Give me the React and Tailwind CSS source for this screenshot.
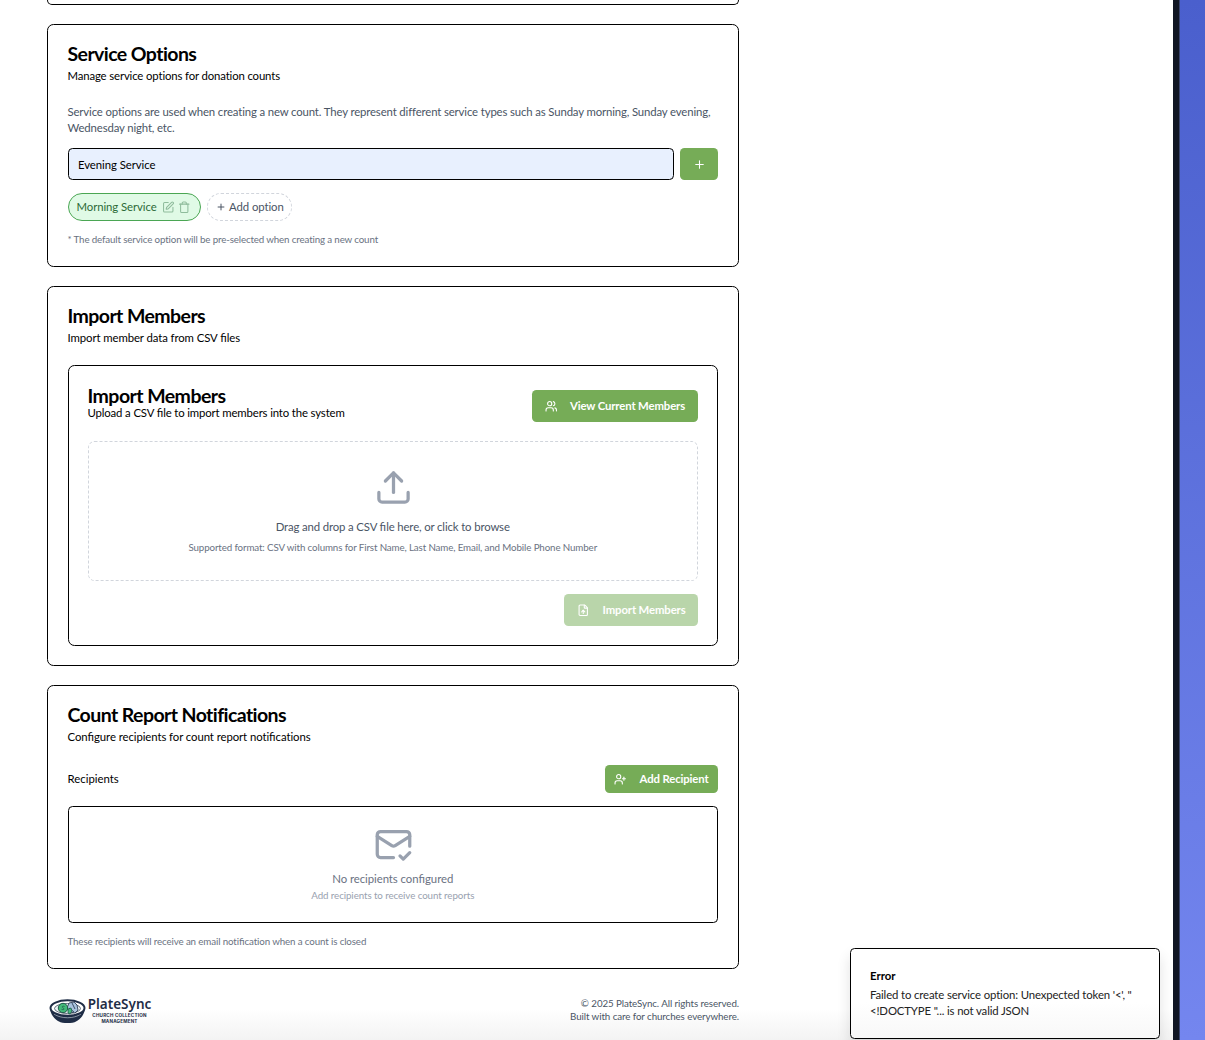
import {
  Plus,
  Upload,
  Users,
  UserPlus,
  FileUp,
  MailCheck,
  SquarePen,
  Trash,
} from "lucide-react";

// Joins "fi" pairs while leaving Lato's other ligatures off.
function Fi() {
  return <span className="tracking-normal [font-feature-settings:'liga'_1]">fi</span>;
}

function Card({ className = "", children }) {
  return (
    <section className={`w-[692px] rounded-[6.5px] border border-black bg-white pr-[20px] pl-[19.5px] ${className}`}>
      {children}
    </section>
  );
}

function CardHeader({ title, description, tracking }) {
  return (
    <header className="h-[60px] pt-[19px]">
      <h2 className="text-[19.5px] leading-[19.5px] font-bold tracking-[-0.58px]">{title}</h2>
      <p className={`mt-[4.5px] text-[11.375px] leading-[16.25px] ${tracking}`}>{description}</p>
    </header>
  );
}

function Button({ icon: Icon, className = "", children }) {
  return (
    <button
      className={`flex items-center justify-end rounded-[4.5px] bg-[#76ac57] text-[11.375px] leading-[16px] font-bold tracking-[-0.14px] text-white ${className}`}
    >
      <Icon size={12.5} strokeWidth={2.1} />
      {children}
    </button>
  );
}

function ServiceOptions() {
  return (
    <Card className="mt-[19px] h-[243px]">
      <CardHeader
        title="Service Options"
        description="Manage service options for donation counts"
        tracking="tracking-[-0.14px]"
      />
      <p className="mt-[19px] text-[11.375px] leading-[16.25px] tracking-[-0.137px] text-gray-600">
        Service options are used when creating a new count. They represent different service types such as Sunday
        morning, Sunday evening, Wednesday night, etc.
      </p>
      <div className="mt-[11.5px] flex gap-[6px]">
        <input
          className="h-8 w-[606px] shrink-0 rounded-[4.5px] border border-black bg-[#e8f0fe] px-[9.5px] pt-px text-[11.375px] tracking-[-0.07px]"
          defaultValue="Evening Service"
        />
        <button className="flex h-8 w-[38px] items-center justify-center rounded-[4.5px] bg-[#76ac57] pl-px text-white">
          <Plus size={13} strokeWidth={2} />
        </button>
      </div>
      <div className="mt-[13px] flex gap-[6.5px] text-[11.375px] leading-[16px] tracking-[-0.08px]">
        <div className="flex h-7 w-[133px] items-center rounded-full border border-[#4aa653] bg-[#e0fae6] pl-[8px] text-[#2d6a38]">
          <span className="w-[80.5px] whitespace-nowrap">Morning Service</span>
          <SquarePen size={12.5} strokeWidth={2} className="ml-[5px] text-[#8fbc9c]" />
          <Trash size={12.5} strokeWidth={2} className="ml-[3.5px] text-[#8fbc9c]" />
        </div>
        <div className="flex h-7 w-[85px] items-center rounded-full border border-dashed border-gray-300 pl-[8px] text-gray-600">
          <Plus size={10} strokeWidth={2.4} />
          <span className="ml-[3px] whitespace-nowrap">Add option</span>
        </div>
      </div>
      <p className="mt-[12px] text-[9.75px] leading-[13px] tracking-[-0.14px] text-gray-500">
        * The default service option will be pre-selected when creating a new count
      </p>
    </Card>
  );
}

function ImportMembers() {
  return (
    <Card className="mt-[19px] h-[380px]">
      <CardHeader
        title="Import Members"
        description={
          <>
            Import member data from CSV <Fi />les
          </>
        }
        tracking="tracking-[-0.09px]"
      />
      <div className="mt-[18px] h-[281px] rounded-[6.5px] border border-black px-[19px]">
        <div className="flex h-[75px] justify-between pt-[20px]">
          <div>
            <h3 className="text-[19.5px] leading-[19.5px] font-bold tracking-[-0.55px]">Import Members</h3>
            <p className="-mt-[0.5px] text-[11.375px] leading-[16px] tracking-[-0.14px]">
              Upload a CSV <Fi />le to import members into the system
            </p>
          </div>
          <Button icon={Users} className="mt-[4px] h-8 w-[166px] gap-[13px] pr-[13px]">
            View Current Members
          </Button>
        </div>
        <div className="flex h-[140px] flex-col items-center rounded-[6.5px] border border-dashed border-gray-300 pt-[25.5px]">
          <Upload size={39} strokeWidth={2} className="ml-[0.5px] text-gray-400" />
          <p className="mt-[12.5px] text-[11.375px] leading-[16px] tracking-[-0.135px] text-gray-600">
            Drag and drop a CSV <Fi />le here, or click to browse
          </p>
          <p className="mt-[6px] text-[9.75px] leading-[13px] tracking-[-0.12px] text-gray-500">
            Supported format: CSV with columns for First Name, Last Name, Email, and Mobile Phone Number
          </p>
        </div>
        <div className="mt-[13px] flex justify-end">
          <Button icon={FileUp} className="h-8 w-[134px] gap-[13px] pr-[12.5px] opacity-50">
            Import Members
          </Button>
        </div>
      </div>
    </Card>
  );
}

function Notifications() {
  return (
    <Card className="mt-[19px] h-[284px]">
      <CardHeader
        title="Count Report Notifications"
        description={
          <>
            Con<Fi />gure recipients for count report noti<Fi />cations
          </>
        }
        tracking="tracking-[-0.08px]"
      />
      <div className="mt-[19px] flex h-7 items-center justify-between">
        <h3 className="text-[11.375px]">Recipients</h3>
        <Button icon={UserPlus} className="h-7 w-[113px] gap-[13px] pr-[9.5px]">
          Add Recipient
        </Button>
      </div>
      <div className="mt-[13px] flex h-[117px] flex-col items-center rounded-[4.5px] border border-black pt-[18px]">
        <MailCheck size={39} strokeWidth={2} className="ml-[0.5px] text-gray-400" />
        <p className="mt-[7px] text-[11.375px] leading-[16px] tracking-[-0.06px] text-gray-500">
          No recipients con<Fi />gured
        </p>
        <p className="mt-[2px] text-[9.75px] leading-[13px] tracking-[-0.08px] text-gray-400">
          Add recipients to receive count reports
        </p>
      </div>
      <p className="mt-[12px] text-[9.75px] leading-[13px] tracking-[-0.125px] text-gray-500">
        These recipients will receive an email noti<Fi />cation when a count is closed
      </p>
    </Card>
  );
}

function Logo() {
  return (
    <div className="flex h-[30px] items-start pl-[2px] text-[#1f2d46]">
      <svg width="38" height="28" viewBox="0 0 38 28" className="mt-px">
        <path d="M1 12c1 7 6 11 9 12.500c3 2 14 2 17 0c4-2 8-6 9-12.500z" fill="#1f2d46" />
        <path d="M5 17c7 5 20 5 27 0" fill="none" stroke="#b9c2cb" strokeWidth="0.700" />
        <ellipse cx="18.500" cy="11" rx="17" ry="7.700" fill="#fff" stroke="#1f2d46" strokeWidth="2" />
        <ellipse cx="18.500" cy="11.500" rx="13" ry="5" fill="#e9f1f3" stroke="#53616f" strokeWidth="0.900" />
        <path d="M20 6l5-1 3 3 1 5-3 3-5-1-3-4z" fill="#a8c3dd" stroke="#1f2d46" strokeWidth="0.800" />
        <path d="M20 11l5 4M23 6l3 6" stroke="#1f2d46" strokeWidth="0.800" />
        <circle cx="14" cy="11" r="4.700" fill="#42b978" stroke="#1f5949" strokeWidth="1" />
        <path d="M15.500 9.500c-2-1-3 .5-1.500 1.300s1.500 2.500-1.500 1.500" fill="none" stroke="#1f5949" strokeWidth="0.800" />
        <path d="M19 12l3-1 1 3-2 3-2-1z" fill="#48b980" stroke="#1f5949" strokeWidth="0.800" />
      </svg>
      <div className="flex w-[65px] flex-col items-center whitespace-nowrap">
        <span className="font-['Noto_Sans','Open_Sans',sans-serif] text-[13.500px] leading-[16px] font-semibold">PlateSync</span>
        <span className="mt-px font-['Inter',sans-serif] text-[4.600px] leading-[6px] font-bold tracking-[0.045em]">CHURCH COLLECTION</span>
        <span className="font-['Inter',sans-serif] text-[4.600px] leading-[6px] font-bold tracking-[0.040em]">MANAGEMENT</span>
      </div>
    </div>
  );
}

function Toast() {
  return (
    <div
      role="alert"
      className="absolute top-[948px] left-[850px] h-[91px] w-[310px] rounded-[4.5px] border border-black bg-linear-to-b from-white from-60% to-[#f8f8f8] px-[19px] pt-[19px] text-[11.375px] leading-[16px] shadow-[0_8px_14px_rgba(0,0,0,0.12)]"
    >
      <p className="font-bold">Error</p>
      <p className="mt-[3px] tracking-[-0.135px] text-[#222]">
        Failed to create service option: Unexpected token '&lt;', "<br />
        &lt;!DOCTYPE "... is not valid JSON
      </p>
    </div>
  );
}

export default function App() {
  return (
    <div className="relative flex h-[1040px] w-[1205px] overflow-hidden bg-white font-['Lato',sans-serif] text-black">
      <main className="h-full flex-1 bg-linear-to-b from-white from-97% to-[#f3f3f3] pl-[47px]">
        <div className="h-[5px] w-[692px] rounded-b-[6.5px] border border-t-0 border-black bg-white" />
        <ServiceOptions />
        <ImportMembers />
        <Notifications />
        <footer className="mt-[27px] flex w-[692px] justify-between">
          <Logo />
          <p className="mt-px text-right text-[9.75px] leading-[13px] tracking-[-0.08px] text-gray-600">
            © 2025 PlateSync. All rights reserved.
            <br />
            Built with care for churches everywhere.
          </p>
        </footer>
      </main>
      <div className="w-[6px] bg-[#101624]" />
      <div className="w-[26px] border-l border-[#39456f] bg-linear-to-b from-[#4a5fcd] to-[#7486ef]" />
      <Toast />
    </div>
  );
}
